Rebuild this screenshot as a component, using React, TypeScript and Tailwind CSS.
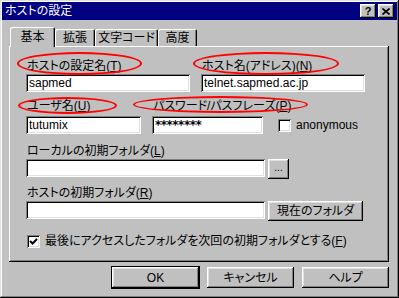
const RAISED =
  'shadow-[inset_-1px_-1px_0_#000,inset_1px_1px_0_#fff,inset_-2px_-2px_0_#808080,inset_2px_2px_0_#dfdfdf]';
const SUNKEN =
  'shadow-[inset_1px_1px_0_#808080,inset_-1px_-1px_0_#fff,inset_2px_2px_0_#000,inset_-2px_-2px_0_#dfdfdf]';

function Field({ value, w, mask }: { value?: string; w: string; mask?: boolean }) {
  return (
    <div
      className={`${SUNKEN} ${w} h-[18px] bg-white px-[3px] text-[12px] leading-[18px] text-black ${
        mask ? "font-['DejaVu_Sans',sans-serif] font-bold tracking-[-0.5px]" : ''
      }`}
    >
      {value}
    </div>
  );
}

function Label({ text, k, w }: { text: string; k: string; w?: string }) {
  return (
    <div className={`${w ?? ''} h-[16px] pl-[1px] leading-[16px] whitespace-nowrap`}>
      {text}(<span className="underline underline-offset-1">{k}</span>)
    </div>
  );
}

function Check({ on }: { on?: boolean }) {
  return (
    <div className={`${SUNKEN} flex h-[13px] w-[13px] shrink-0 items-center justify-center bg-white`}>
      {on && (
        <svg width="9" height="9" viewBox="0 0 9 9">
          <polyline points="1,4 3.5,6.5 8,2" fill="none" stroke="#000" strokeWidth="2" />
        </svg>
      )}
    </div>
  );
}

function Ellipse({ cls }: { cls: string }) {
  return <div className={`pointer-events-none absolute rounded-[50%] border-2 border-[#ff0000] ${cls}`} />;
}

const TABS = ['基本', '拡張', '文字コード', '高度'];
const TAB_W = ['w-[45px]', 'w-[40px]', 'w-[63px]', 'w-[39px]'];

export default function App() {
  return (
    <div className="relative h-[298px] w-[399px] overflow-hidden bg-[#c0c0c0] p-[2px] font-['Liberation_Sans','Noto_Sans_CJK_JP',sans-serif] text-[12px] text-black [font-feature-settings:'palt'] shadow-[inset_-1px_-1px_0_#000,inset_1px_1px_0_#dfdfdf,inset_-2px_-2px_0_#808080,inset_2px_2px_0_#fff]">
      {/* title bar */}
      <div className="flex h-[18px] items-center bg-[#000080] pl-[3px] pr-[3px]">
        <span className="text-[12px] leading-[16px] text-white">ホストの設定</span>
        <div className="ml-auto flex gap-[2px]">
          <div className={`${RAISED} flex h-[14px] w-[16px] items-center justify-center bg-[#c0c0c0] text-[11px] font-bold leading-none`}>
            ?
          </div>
          <div className={`${RAISED} flex h-[14px] w-[16px] items-center justify-center bg-[#c0c0c0]`}>
            <svg width="8" height="7" viewBox="0 0 8 7">
              <path d="M0.5 0.5 L7.5 6.5 M7.5 0.5 L0.5 6.5" stroke="#000" strokeWidth="1.6" />
            </svg>
          </div>
        </div>
      </div>

      <div className="ml-[7px] mr-[8px] mt-[7px]">
        {/* tabs */}
        <div className="flex h-[19px] items-end pl-[1px]">
          {TABS.map((t, i) =>
            i === 0 ? (
              <div
                key={t}
                className={`${TAB_W[i]} relative z-10 -mb-[1px] flex h-[20px] items-center justify-center rounded-t-[2px] bg-[#c0c0c0] pb-[1px] shadow-[inset_1px_1px_0_#fff,inset_-1px_0_0_#000,inset_-2px_0_0_#808080]`}
              >
                {t}
              </div>
            ) : (
              <div
                key={t}
                className={`${TAB_W[i]} flex h-[17px] items-center justify-center rounded-t-[2px] bg-[#c0c0c0] pt-[1px] shadow-[inset_1px_1px_0_#fff,inset_-1px_0_0_#000,inset_-2px_0_0_#808080]`}
              >
                {t}
              </div>
            )
          )}
        </div>

        {/* panel */}
        <div className="h-[216px] pl-[17px] pt-[12px] shadow-[inset_-1px_-1px_0_#000,inset_1px_1px_0_#fff,inset_-2px_-2px_0_#808080]">
          <div className="flex gap-[11px]">
            <Label text="ホストの設定名" k="T" w="w-[164px]" />
            <Label text="ホスト名(アドレス)" k="N" />
          </div>
          <div className="flex gap-[11px]">
            <Field value="sapmed" w="w-[164px]" />
            <Field value="telnet.sapmed.ac.jp" w="w-[164px]" />
          </div>

          <div className="mt-[6px] flex gap-[11px]">
            <Label text="ユーザ名" k="U" w="w-[115px]" />
            <Label text="パスワード/パスフレーズ" k="P" />
          </div>
          <div className="mt-[2px] flex items-center">
            <Field value="tutumix" w="w-[115px]" />
            <div className="ml-[11px]">
              <Field value="********" w="w-[111px]" mask />
            </div>
            <div className="ml-[15px]">
              <Check />
            </div>
            <span className="ml-[5px] leading-[16px]">anonymous</span>
          </div>

          <div className="mt-[9px]">
            <Label text="ローカルの初期フォルダ" k="L" />
          </div>
          <div className="flex items-start gap-[3px]">
            <Field w="w-[239px]" />
            <div className={`${RAISED} flex h-[20px] w-[21px] items-center justify-center bg-[#c0c0c0] pb-[3px] text-[10px] leading-none`}>
              ...
            </div>
          </div>

          <div className="mt-[6px]">
            <Label text="ホストの初期フォルダ" k="R" />
          </div>
          <div className="flex items-start gap-[3px]">
            <Field w="w-[239px]" />
            <div className={`${RAISED} flex h-[20px] w-[95px] items-center justify-center bg-[#c0c0c0] leading-none`}>
              現在のフォルダ
            </div>
          </div>

          <div className="mt-[12px] flex h-[16px] items-center gap-[5px] pl-[1px]">
            <Check on />
            <span className="whitespace-nowrap leading-[16px]">
              最後にアクセスしたフォルダを次回の初期フォルダとする(<span className="underline underline-offset-1">F</span>)
            </span>
          </div>
        </div>

        {/* buttons */}
        <div className="mt-[5px] flex justify-end gap-[8px]">
          <div className={`${RAISED} flex h-[21px] w-[87px] items-center justify-center bg-[#c0c0c0] outline outline-1 outline-black`}>
            OK
          </div>
          <div className={`${RAISED} flex h-[21px] w-[87px] items-center justify-center bg-[#c0c0c0]`}>キャンセル</div>
          <div className={`${RAISED} flex h-[21px] w-[87px] items-center justify-center bg-[#c0c0c0]`}>ヘルプ</div>
        </div>
      </div>

      {/* red annotation ellipses */}
      <Ellipse cls="left-[17px] top-[52px] h-[23px] w-[125px]" />
      <Ellipse cls="left-[193px] top-[52px] h-[23px] w-[146px]" />
      <Ellipse cls="left-[18px] top-[97px] h-[17px] w-[99px]" />
      <Ellipse cls="left-[133px] top-[96px] h-[17px] w-[175px]" />
    </div>
  );
}
